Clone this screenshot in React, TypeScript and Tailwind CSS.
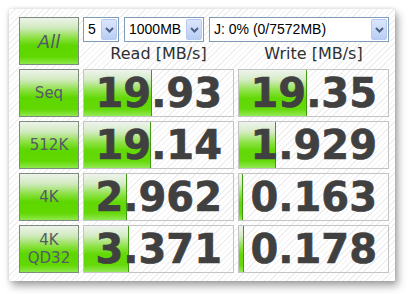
import React from 'react';

type Row = {
  label: string[];
  read: string;
  readBar: number;
  write: string;
  writeBar: number;
};

const rows: Row[] = [
  { label: ['Seq'], read: '19.93', readBar: 68, write: '19.35', writeBar: 68 },
  { label: ['512K'], read: '19.14', readBar: 67, write: '1.929', writeBar: 37 },
  { label: ['4K'], read: '2.962', readBar: 43, write: '0.163', writeBar: 4 },
  { label: ['4K', 'QD32'], read: '3.371', readBar: 45, write: '0.178', writeBar: 5 },
];

const greenBtn =
  'border border-[#7d8c7d] bg-[linear-gradient(to_bottom,#eef3ec_0%,#cfe9bb_22%,#86e03a_45%,#5dd600_60%,#62d802_85%,#8ee84c_100%)] text-[#555a66] [font-family:"DejaVu_Sans",sans-serif]';

function Chevron() {
  return (
    <div className="flex h-[21px] w-[16px] items-center justify-center rounded-[2px] border border-[#b6c9ef] bg-[linear-gradient(to_bottom,#dbe6fb,#b9cdf5)]">
      <svg width="9" height="6" viewBox="0 0 9 6">
        <path d="M1 1 L4.5 4.5 L8 1" fill="none" stroke="#4d6185" strokeWidth="2" />
      </svg>
    </div>
  );
}

function Select({ text, width }: { text: string; width: string }) {
  return (
    <div
      className={`${width} flex h-[25px] items-center justify-between border border-[#7f9db9] bg-white pl-[4px] pr-[1px]`}
    >
      <span className="text-[14px] text-black [font-family:'Liberation_Sans',sans-serif]">
        {text}
      </span>
      <Chevron />
    </div>
  );
}

function ValueCell({ value, bar }: { value: string; bar: number }) {
  return (
    <div className="relative flex h-[48px] w-[151px] items-center justify-end border border-[#c4c4c4] pr-[11px]">
      <div
        className="absolute left-0 top-0 h-full border-r border-[#3f9a10] bg-[linear-gradient(to_bottom,#f0f3ef_0%,#d3ebc2_22%,#8ce244_45%,#62d805_62%,#66d90a_85%,#93e955_100%)]"
        style={{ width: bar }}
      />
      <span className="relative text-[40px] font-bold leading-none text-[#404040] [font-family:'DejaVu_Sans',sans-serif] [-webkit-text-stroke:0.6px_#404040]">
        {value}
      </span>
    </div>
  );
}

export default function App() {
  return (
    <div className="h-[294px] w-[408px] bg-white pl-[9px] pt-[9px]">
      <div className="h-[272px] w-[386px] bg-[repeating-linear-gradient(135deg,#efefef_0px,#efefef_1px,#ffffff_1px,#ffffff_4px)] pl-[10px] pt-[8px] shadow-[0_0_4px_rgba(0,0,0,0.15),3px_5px_8px_rgba(0,0,0,0.35)]">
        <div className="flex gap-[4px]">
          <div className={`${greenBtn} flex h-[48px] w-[60px] items-center justify-center text-[18px] italic`}>
            All
          </div>
          <div className="flex flex-col">
            <div className="flex gap-[5px]">
              <Select text="5" width="w-[36px]" />
              <Select text="1000MB" width="w-[80px]" />
              <Select text="J: 0% (0/7572MB)" width="w-[180px]" />
            </div>
            <div className="flex h-[23px] items-center gap-[4px] text-[16px] text-[#303030] [font-family:'DejaVu_Sans',sans-serif]">
              <div className="w-[151px] text-center">Read [MB/s]</div>
              <div className="w-[151px] text-center">Write [MB/s]</div>
            </div>
          </div>
        </div>
        <div className="mt-[4px] flex flex-col gap-[4px]">
          {rows.map((r) => (
            <div key={r.read} className="flex gap-[4px]">
              <div
                className={`${greenBtn} flex h-[48px] w-[60px] flex-col items-center justify-center text-[15px] leading-[18px]`}
              >
                {r.label.map((l) => (
                  <span key={l}>{l}</span>
                ))}
              </div>
              <ValueCell value={r.read} bar={r.readBar} />
              <ValueCell value={r.write} bar={r.writeBar} />
            </div>
          ))}
        </div>
      </div>
    </div>
  );
}
